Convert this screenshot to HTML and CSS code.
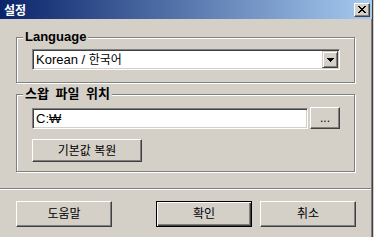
FILE: index.html
```html
<!DOCTYPE html>
<html lang="ko">
<head>
<meta charset="utf-8">
<title>설정</title>
<link rel="stylesheet" href="styles.css">
</head>
<body>
<div class="window">
  <div class="titlebar">
    <span class="title">설정</span>
    <button class="close" aria-label="닫기">
      <svg width="8" height="7" viewBox="0 0 8 7" shape-rendering="crispEdges"><path fill="#000" d="M0 0h2v1H0zM6 0h2v1H6zM1 1h2v1H1zM5 1h2v1H5zM2 2h4v1H2zM3 3h2v1H3zM2 4h4v1H2zM1 5h2v1H1zM5 5h2v1H5zM0 6h2v1H0zM6 6h2v1H6z"/></svg>
    </button>
  </div>
  <div class="content">
    <fieldset class="group lang">
      <legend>Language</legend>
      <div class="combo">
        <span class="combo-text">Korean / <span class="ko">한국어</span></span>
        <span class="combo-btn">
          <svg width="7" height="4" viewBox="0 0 7 4" shape-rendering="crispEdges"><path fill="#000" d="M0 0h7v1H0zM1 1h5v1H1zM2 2h3v1H2zM3 3h1v1H3z"/></svg>
        </span>
      </div>
    </fieldset>
    <fieldset class="group swap">
      <legend>스왑 파일 위치</legend>
      <div class="path-row">
        <div class="field">C:₩</div>
        <button class="btn browse">...</button>
      </div>
      <button class="btn restore">기본값 복원</button>
    </fieldset>
  </div>
  <div class="separator"></div>
  <div class="actions">
    <button class="btn action">도움말</button>
    <button class="btn action default">확인</button>
    <button class="btn action">취소</button>
  </div>
</div>
</body>
</html>
```
FILE: styles.css
```css
* { box-sizing: border-box; }

body {
  margin: 0;
  background: #d4d0c8;
  font-family: "Liberation Sans", "Noto Sans CJK KR", sans-serif;
  font-size: 12px;
  color: #000;
}

.window {
  width: 373px;
  height: 237px;
  background: #d4d0c8;
  border-right: 1px solid #404040;
  box-shadow: inset -1px 0 #808080;
  display: flex;
  flex-direction: column;
}

.titlebar {
  height: 19px;
  background: linear-gradient(to right, #0a246a, #a6caf0);
  display: flex;
  align-items: center;
  justify-content: space-between;
  padding: 0 2px 0 4px;
}

.title {
  color: #fff;
  font: bold 12px/14px "Noto Sans CJK KR", sans-serif;
}

.close {
  width: 16px;
  height: 14px;
  padding: 0;
  margin: 0;
  background: #d4d0c8;
  border: 1px solid;
  border-color: #fff #404040 #404040 #fff;
  box-shadow: inset -1px -1px #808080;
  display: flex;
  align-items: center;
  justify-content: center;
}

.content {
  padding: 11px 0 0 16px;
}

.group {
  margin: 0;
  min-width: 0;
  width: 339px;
  border: 1px solid #808080;
  box-shadow: inset 1px 1px #fff, 1px 1px #fff;
  padding: 5px 14px 12px 15px;
}

.group legend {
  font: bold 13px/14px "Liberation Sans", "Noto Sans CJK KR", sans-serif;
  word-spacing: 3px;
  padding: 0 2px;
  margin-left: -9px;
  background: #d4d0c8;
}

.swap {
  margin-top: 4px;
  padding: 6px 14px 9px 15px;
}

.combo {
  width: 308px;
  height: 21px;
  background: #fff;
  border: 1px solid;
  border-color: #808080 #fff #fff #808080;
  box-shadow: inset 1px 1px #404040, inset -1px -1px #d4d0c8;
  padding: 1px;
  display: flex;
  align-items: center;
}

.combo-text {
  flex: 1;
  padding-left: 2px;
  font-size: 13px;
  line-height: 15px;
}

.ko {
  font-size: 12px;
}

.combo-btn {
  width: 16px;
  height: 17px;
  background: #d4d0c8;
  border: 1px solid;
  border-color: #d4d0c8 #404040 #404040 #d4d0c8;
  box-shadow: inset 1px 1px #fff, inset -1px -1px #808080;
  display: flex;
  align-items: center;
  justify-content: center;
  padding-top: 1px;
}

.path-row {
  display: flex;
  align-items: flex-end;
  height: 22px;
}

.field {
  width: 276px;
  height: 21px;
  background: #fff;
  border: 1px solid;
  border-color: #808080 #fff #fff #808080;
  box-shadow: inset 1px 1px #404040, inset -1px -1px #d4d0c8;
  padding: 2px 3px;
  font-size: 13px;
  line-height: 15px;
}

.btn {
  font: 12px/14px "Liberation Sans", "Noto Sans CJK KR", sans-serif;
  color: #000;
  background: #d4d0c8;
  border: 1px solid;
  border-color: #fff #404040 #404040 #fff;
  box-shadow: inset -1px -1px #808080, inset 1px 1px #d4d0c8;
  padding: 0;
  margin: 0;
}

.browse {
  width: 30px;
  height: 22px;
  margin-left: 2px;
}

.restore {
  display: block;
  width: 110px;
  height: 23px;
  margin-top: 10px;
}

.separator {
  margin-top: 16px;
  width: 371px;
  height: 2px;
  border-top: 1px solid #808080;
  border-bottom: 1px solid #fff;
}

.actions {
  display: flex;
  padding: 11px 0 0 16px;
  gap: 8px;
}

.action {
  width: 96px;
  height: 26px;
}

.default {
  margin-left: 36px;
  border: 1px solid #000;
  box-shadow: inset 1px 1px #fff, inset -1px -1px #404040, inset -2px -2px #808080;
}
```
